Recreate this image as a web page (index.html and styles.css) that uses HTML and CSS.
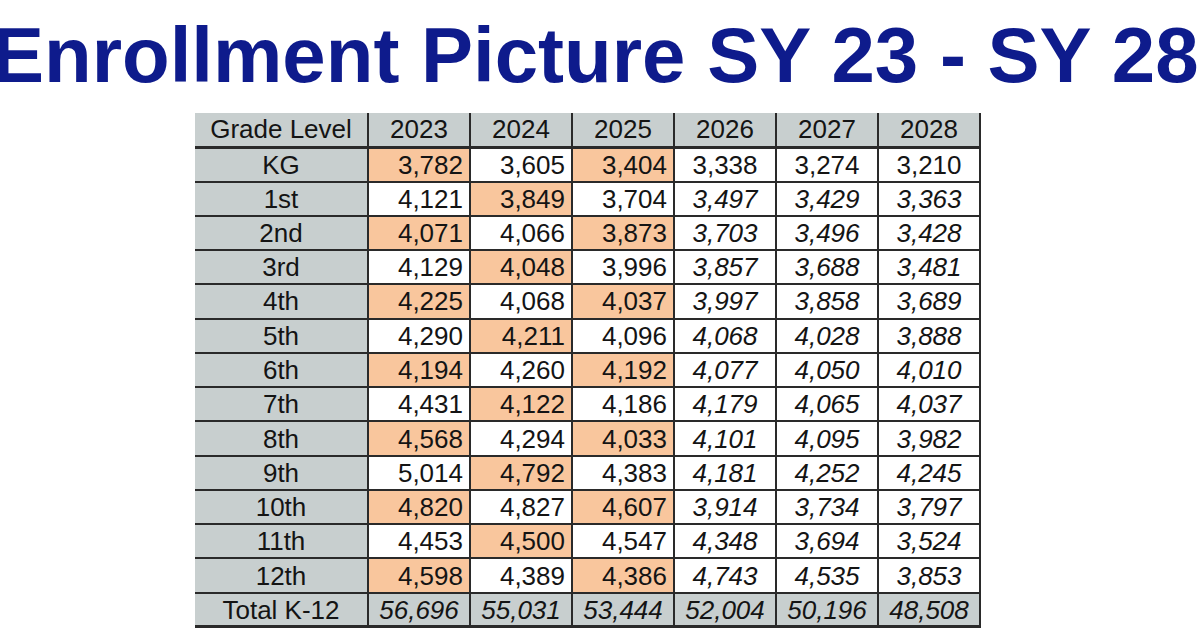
FILE: index.html
```html
<!DOCTYPE html>
<html>
<head>
<meta charset="utf-8">
<link rel="stylesheet" href="styles.css">
</head>
<body>
<h1 class="title">Enrollment Picture SY 23 - SY 28</h1>
<table class="enroll">
<thead>
<tr><th class="lbl">Grade Level</th><th>2023</th><th>2024</th><th>2025</th><th>2026</th><th>2027</th><th>2028</th></tr>
</thead>
<tbody>
<tr><td class="lbl">KG</td><td class="num hl">3,782</td><td class="num">3,605</td><td class="num hl">3,404</td><td class="proj up">3,338</td><td class="proj up">3,274</td><td class="proj up">3,210</td></tr>
<tr><td class="lbl">1st</td><td class="num">4,121</td><td class="num hl">3,849</td><td class="num">3,704</td><td class="proj">3,497</td><td class="proj">3,429</td><td class="proj">3,363</td></tr>
<tr><td class="lbl">2nd</td><td class="num hl">4,071</td><td class="num">4,066</td><td class="num hl">3,873</td><td class="proj">3,703</td><td class="proj">3,496</td><td class="proj">3,428</td></tr>
<tr><td class="lbl">3rd</td><td class="num">4,129</td><td class="num hl">4,048</td><td class="num">3,996</td><td class="proj">3,857</td><td class="proj">3,688</td><td class="proj">3,481</td></tr>
<tr><td class="lbl">4th</td><td class="num hl">4,225</td><td class="num">4,068</td><td class="num hl">4,037</td><td class="proj">3,997</td><td class="proj">3,858</td><td class="proj">3,689</td></tr>
<tr><td class="lbl">5th</td><td class="num">4,290</td><td class="num hl">4,211</td><td class="num">4,096</td><td class="proj">4,068</td><td class="proj">4,028</td><td class="proj">3,888</td></tr>
<tr><td class="lbl">6th</td><td class="num hl">4,194</td><td class="num">4,260</td><td class="num hl">4,192</td><td class="proj">4,077</td><td class="proj">4,050</td><td class="proj">4,010</td></tr>
<tr><td class="lbl">7th</td><td class="num">4,431</td><td class="num hl">4,122</td><td class="num">4,186</td><td class="proj">4,179</td><td class="proj">4,065</td><td class="proj">4,037</td></tr>
<tr><td class="lbl">8th</td><td class="num hl">4,568</td><td class="num">4,294</td><td class="num hl">4,033</td><td class="proj">4,101</td><td class="proj">4,095</td><td class="proj">3,982</td></tr>
<tr><td class="lbl">9th</td><td class="num">5,014</td><td class="num hl">4,792</td><td class="num">4,383</td><td class="proj">4,181</td><td class="proj">4,252</td><td class="proj">4,245</td></tr>
<tr><td class="lbl">10th</td><td class="num hl">4,820</td><td class="num">4,827</td><td class="num hl">4,607</td><td class="proj">3,914</td><td class="proj">3,734</td><td class="proj">3,797</td></tr>
<tr><td class="lbl">11th</td><td class="num">4,453</td><td class="num hl">4,500</td><td class="num">4,547</td><td class="proj">4,348</td><td class="proj">3,694</td><td class="proj">3,524</td></tr>
<tr><td class="lbl">12th</td><td class="num hl">4,598</td><td class="num">4,389</td><td class="num hl">4,386</td><td class="proj">4,743</td><td class="proj">4,535</td><td class="proj">3,853</td></tr>
</tbody>
<tfoot>
<tr><td class="lbl">Total K-12</td><td class="tot">56,696</td><td class="tot">55,031</td><td class="tot">53,444</td><td class="tot">52,004</td><td class="tot">50,196</td><td class="tot">48,508</td></tr>
</tfoot>
</table>
</body>
</html>
```

FILE: styles.css
```css
html, body {
  margin: 0;
  padding: 0;
  background: #ffffff;
  overflow: hidden;
}
body {
  width: 1200px;
  height: 630px;
  font-family: "Liberation Sans", Arial, sans-serif;
}
.title {
  margin: 16px 0 0 -8px;
  font-size: 78px;
  line-height: 78px;
  font-weight: bold;
  color: #0e1b8c;
  white-space: nowrap;
}
.enroll {
  margin: 19px 0 0 195px;
  border-collapse: collapse;
  table-layout: fixed;
  width: 775px;
  font-size: 26px;
  color: #141414;
  border: none;
}
.enroll tr {
  height: 34.27px;
}
.enroll th, .enroll td {
  padding: 0;
  font-weight: normal;
  border: 2px solid #2a2a2a;
  line-height: 30px;
  white-space: nowrap;
}
.enroll th {
  background: #c8cfcf;
  text-align: center;
  border-top: hidden;
  border-bottom-width: 3px;
  width: 100px;
}
.enroll th.lbl {
  width: 172px;
}
.enroll .lbl {
  background: #c8cfcf;
  text-align: center;
  border-left: hidden;
}
.enroll .num {
  text-align: right;
  padding-right: 6px;
  background: #ffffff;
}
.enroll .num.hl {
  background: #f9c69d;
}
.enroll .proj {
  text-align: center;
  font-style: italic;
  background: #ffffff;
}
.enroll .proj.up {
  font-style: normal;
}
.enroll .tot {
  background: #c8cfcf;
  text-align: center;
  font-style: italic;
}
.enroll tfoot td {
  border-bottom-width: 3px;
}
```
